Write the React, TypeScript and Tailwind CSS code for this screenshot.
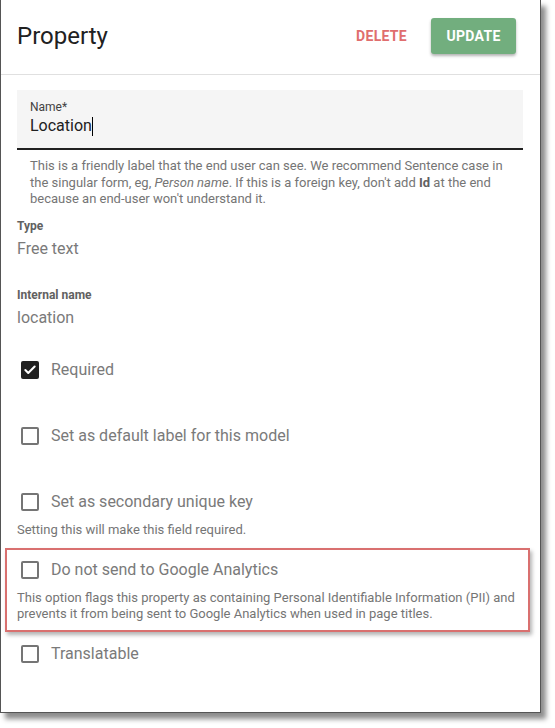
import { Check } from 'lucide-react';

interface CheckRowProps {
  label: string;
  checked?: boolean;
}

function CheckRow({ label, checked = false }: CheckRowProps) {
  return (
    <div className="flex items-center h-[24px] pl-[4px]">
      {checked ? (
        <span className="w-[18px] h-[18px] rounded-[2px] bg-[#212121] flex items-center justify-center">
          <Check className="w-[14px] h-[14px] text-white" strokeWidth={3.5} />
        </span>
      ) : (
        <span className="w-[18px] h-[18px] rounded-[2px] border-2 border-[#757575] box-border" />
      )}
      <span className="ml-[12px] text-[16px] leading-[20px] text-[#7a7a7a]">{label}</span>
    </div>
  );
}

export default function App() {
  return (
    <div className="w-[555px] h-[728px] bg-white font-['Roboto',sans-serif]">
      <div className="w-[541px] h-[713px] bg-white border-l border-r border-b border-[#555] shadow-[5px_6px_5px_rgba(0,0,0,0.45)] flex flex-col">
        {/* header */}
        <div className="h-[75px] flex items-center pl-[16px] pr-[24px] pb-[2px] border-b border-[#e0e0e0]">
          <h1 className="flex-1 text-[24px] leading-[30px] text-[#212121]">Property</h1>
          <button className="text-[14px] font-bold tracking-[0.3px] text-[#e06e6e] mr-[24px]">DELETE</button>
          <button className="w-[85px] h-[36px] rounded-[3px] bg-[#72ae7e] text-white text-[14px] font-bold tracking-[0.3px] shadow-[0_2px_3px_rgba(0,0,0,0.3)]">
            UPDATE
          </button>
        </div>

        <div className="flex flex-col pl-[16px] pr-[17px]">
          {/* name field */}
          <div className="mt-[15px] h-[60px] bg-[#f5f5f5] border-b-2 border-[#212121] pl-[13px] pt-[9px]">
            <div className="text-[12px] leading-[16px] text-[#424242]">Name*</div>
            <div className="flex items-center text-[16px] leading-[22px] text-[#212121]">
              Location
              <span className="w-[1px] h-[19px] bg-black" />
            </div>
          </div>
          <p className="mt-[8px] px-[13px] text-[13px] leading-[16.5px] text-[#757575]">
            This is a friendly label that the end user can see. We recommend Sentence case in the singular form, eg,{' '}
            <em>Person name</em>. If this is a foreign key, don't add <b className="text-[#616161]">Id</b> at the end
            because an end-user won't understand it.
          </p>

          {/* read-only fields */}
          <div className="mt-[10px] text-[12px] leading-[17px] font-bold text-[#616161]">Type</div>
          <div className="mt-[4px] text-[16px] leading-[20px] text-[#7a7a7a]">Free text</div>
          <div className="mt-[28px] text-[12px] leading-[17px] font-bold text-[#616161]">Internal name</div>
          <div className="mt-[4px] text-[16px] leading-[20px] text-[#7a7a7a]">location</div>

          {/* options */}
          <div className="mt-[30px]">
            <CheckRow label="Required" checked />
          </div>
          <div className="mt-[42px]">
            <CheckRow label="Set as default label for this model" />
          </div>
          <div className="mt-[42px]">
            <CheckRow label="Set as secondary unique key" />
          </div>
          <p className="mt-[8px] text-[13px] leading-[16px] text-[#757575]">Setting this will make this field required.</p>

          <div className="mt-[10px] -ml-[12px] -mr-[7px] border-2 border-[#d9706f] pl-[10px] pt-[8px] pb-[8px] shadow-[2px_3px_4px_rgba(0,0,0,0.3)]">
            <CheckRow label="Do not send to Google Analytics" />
            <p className="mt-[8px] text-[13px] leading-[16px] text-[#757575]">
              This option flags this property as containing Personal Identifiable Information (PII) and prevents it from
              being sent to Google Analytics when used in page titles.
            </p>
          </div>

          <div className="mt-[10px]">
            <CheckRow label="Translatable" />
          </div>
        </div>
      </div>
    </div>
  );
}
